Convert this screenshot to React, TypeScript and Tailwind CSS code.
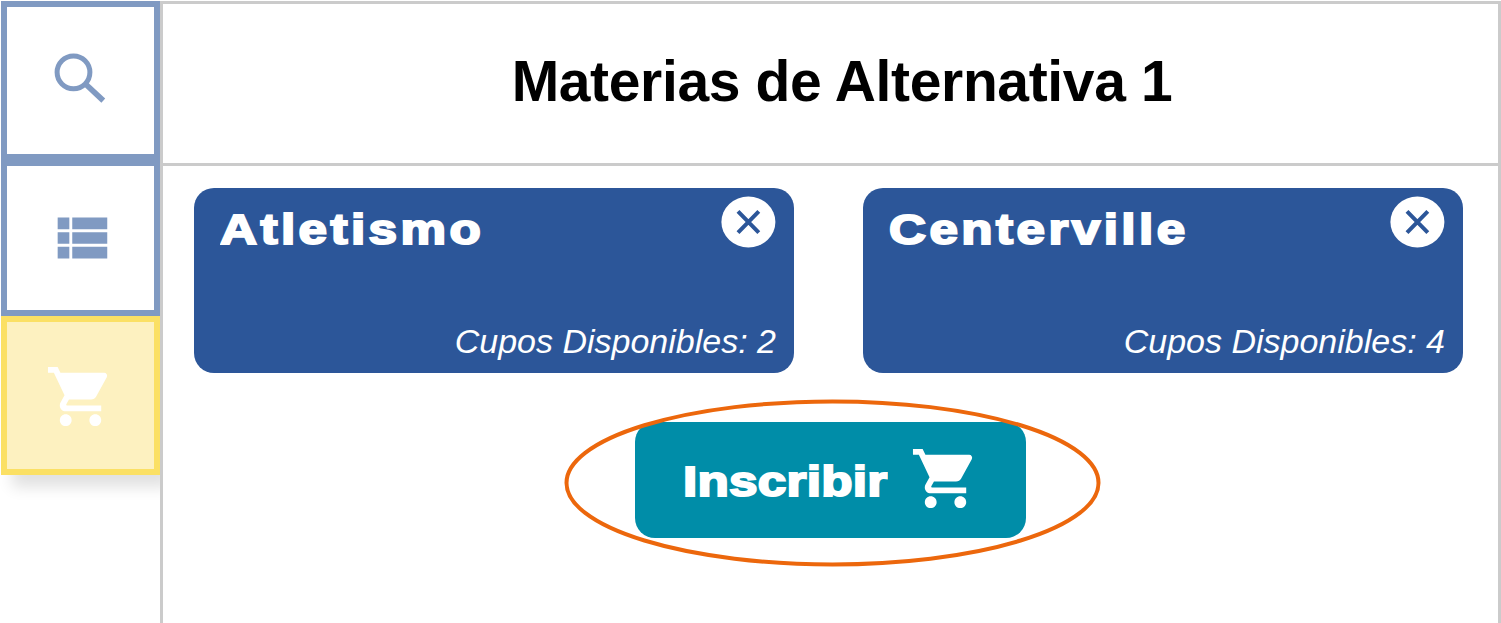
import type { ReactNode } from 'react';
import { MdShoppingCart } from 'react-icons/md';

function SideItem({ className, children }: { className: string; children: ReactNode }) {
  return (
    <button className={`flex w-[159px] shrink-0 items-center justify-center border-6 ${className}`}>
      {children}
    </button>
  );
}

function SearchIcon() {
  return (
    <svg className="size-[70px]" viewBox="0 0 70 70" fill="none" stroke="currentColor">
      <circle cx="27.5" cy="26.3" r="16.4" strokeWidth="5" />
      <path d="M39.5 38 57.3 54.6" strokeWidth="5.6" />
    </svg>
  );
}

function ListIcon() {
  return (
    <svg className="size-[70px]" viewBox="0 0 24 24" fill="currentColor">
      <path d="M4 14h4v-4H4v4zm0 5h4v-4H4v4zM4 9h4V5H4v4zm5 5h12v-4H9v4zm0 5h12v-4H9v4zM9 5v4h12V5H9z" />
    </svg>
  );
}

function CloseIcon() {
  return (
    <svg className="h-[52px] w-[56px]" viewBox="0 0 56 52" fill="none">
      <ellipse cx="28.4" cy="26" rx="27" ry="25.4" fill="#fff" />
      <path d="M18 15.3 38.8 36.7M38.8 15.3 18 36.7" stroke="#2c5699" strokeWidth="4" />
    </svg>
  );
}

function CourseCard({ name, seats }: { name: string; seats: number }) {
  return (
    <article className="flex h-[184.5px] w-[600px] flex-col justify-between rounded-[20px] bg-[#2c5699] pt-2 pr-[18px] pb-[12px] pl-[26px] text-white">
      <div className="flex items-start justify-between">
        <h2 className="origin-left scale-x-[1.22] pt-[10px] text-[42px] leading-[48px] font-bold tracking-[2.8px] [-webkit-text-stroke:2px_white]">
          {name}
        </h2>
        <button aria-label="Quitar">
          <CloseIcon />
        </button>
      </div>
      <p className="text-right text-[34px] leading-[40px] italic">Cupos Disponibles: {seats}</p>
    </article>
  );
}

export default function App() {
  return (
    <div className="flex h-[623px] w-[1501px] overflow-hidden bg-white font-['Liberation_Sans',Arial,sans-serif]">
      <nav className="flex w-[160px] shrink-0 flex-col overflow-hidden pt-px pl-px text-[#809ac2]">
        <SideItem className="h-[159px] border-[#809ac2]">
          <SearchIcon />
        </SideItem>
        <SideItem className="h-[156px] border-[#809ac2]">
          <ListIcon />
        </SideItem>
        <SideItem className="h-[159px] border-[#fbe064] bg-[#fdf1c0] pt-[2px] text-white shadow-[11px_12px_14px_rgba(0,0,0,0.12)]">
          <MdShoppingCart size={71} />
        </SideItem>
      </nav>
      <main className="mt-px flex-1 border-t-3 border-r-3 border-l-3 border-[#cbcbcb]">
        <header className="flex h-[162px] items-center justify-center border-b-3 border-[#cbcbcb] pb-[5px] pl-[23px]">
          <h1 className="text-[57px] leading-[64px] font-bold tracking-[-0.35px] text-black">Materias de Alternativa 1</h1>
        </header>
        <section className="flex gap-[69px] pt-[22px] pl-[31px]">
          <CourseCard name="Atletismo" seats={2} />
          <CourseCard name="Centerville" seats={4} />
        </section>
        <div className="mt-[49.5px] flex pl-[472px]">
          <div className="relative">
            <button className="flex h-[116px] w-[391px] items-center rounded-[20px] bg-[#008da8] pb-[3px] pl-[48px] text-white">
              <span className="w-[227px] pt-[7px] text-left">
                <span className="inline-block origin-left scale-x-[1.22] text-[42px] leading-[48px] font-bold tracking-[0.2px] [-webkit-text-stroke:2px_white]">
                  Inscribir
                </span>
              </span>
              <MdShoppingCart size={71} />
            </button>
            <svg className="pointer-events-none absolute -top-[24px] -left-[72px] h-[170px] w-[540px]" viewBox="0 0 540 170" fill="none">
              <ellipse cx="269.5" cy="84.9" rx="266" ry="81.5" stroke="#ec670c" strokeWidth="4" />
            </svg>
          </div>
        </div>
      </main>
    </div>
  );
}
